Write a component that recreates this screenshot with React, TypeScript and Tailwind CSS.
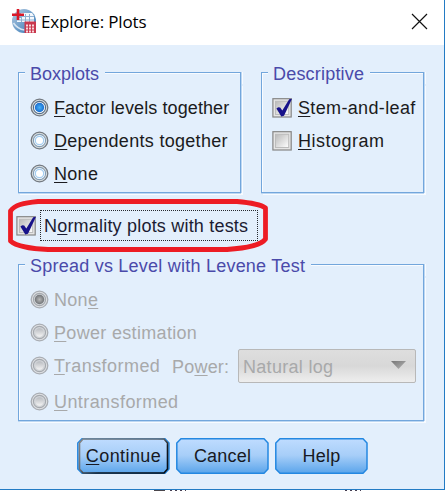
import React from "react";

type GroupProps = { title: string; titleClass: string; className: string; children: React.ReactNode };

function Group({ title, titleClass, className, children }: GroupProps) {
  return (
    <section className={`flex flex-col ${className}`}>
      <div className="flex h-[20px] shrink-0">
        <span className="mt-[8px] h-[12px] w-[7px] shrink-0 border-t border-l border-[#72a6dc] shadow-[inset_1px_1px_0_#f8fbff]" />
        <h2 className={`ml-[5px] mr-[6px] shrink-0 whitespace-nowrap text-[18px] leading-[20px] text-[#4a4aaa] ${titleClass}`}>{title}</h2>
        <span className="mt-[8px] h-[12px] flex-1 border-t border-r border-[#72a6dc] shadow-[inset_0_1px_0_#f8fbff,1px_0_0_#bdd7f2,2px_0_0_#f8fbff]" />
      </div>
      <div className="flex-1 border-x border-b border-[#72a6dc] pl-[11px] shadow-[inset_1px_0_0_#f8fbff,1px_0_0_#bdd7f2,0_1px_0_#bdd7f2,2px_2px_0_#f8fbff]">
        {children}
      </div>
    </section>
  );
}

function Radio({ checked = false, disabled = false }: { checked?: boolean; disabled?: boolean }) {
  const ring = disabled ? "#a9adb3" : "#737980";
  return (
    <svg className="mb-[2px] size-[19px] shrink-0" viewBox="0 0 19 19">
      <defs>
        <linearGradient id="offDisabled" x1="0" y1="0" x2="0" y2="1">
          <stop offset="0" stopColor="#b8bbc0" />
          <stop offset="1" stopColor="#f3f3f3" />
        </linearGradient>
        <radialGradient id="onDisabled">
          <stop offset="0" stopColor="#b8b8b8" />
          <stop offset="1" stopColor="#717477" />
        </radialGradient>
        <radialGradient id="onEnabled">
          <stop offset="0" stopColor="#45b2fa" />
          <stop offset="1" stopColor="#1b6ed0" />
        </radialGradient>
      </defs>
      <circle cx="9.5" cy="9.5" r="8.3" fill={disabled ? "#dfe1e4" : "#d9dedf"} stroke={ring} strokeWidth="1.3" />
      <circle cx="9.5" cy="9.5" r="6.1" fill={disabled ? "#d1d4d8" : "#ffffff"} stroke={disabled ? "#a5a9ae" : checked ? "#546d88" : "#849db4"} strokeWidth="1.1" />
      {!checked && !disabled && <circle cx="9.5" cy="9.5" r="4.2" fill="#ffffff" stroke="#a5cef1" strokeWidth="1.3" />}
      {!checked && disabled && <circle cx="9.5" cy="9.5" r="4.2" fill="url(#offDisabled)" />}
      {checked && <circle cx="9.5" cy="9.5" r="4.7" fill={disabled ? "url(#onDisabled)" : "url(#onEnabled)"} />}
    </svg>
  );
}

function Check({ checked = false }: { checked?: boolean }) {
  return (
    <svg className="size-[20px] shrink-0" viewBox="0 0 20 20">
      <defs>
        <linearGradient id="boxFill" x1="0" y1="0" x2="1" y2="1">
          <stop offset="0" stopColor="#b9b9b9" />
          <stop offset="1" stopColor="#ffffff" />
        </linearGradient>
      </defs>
      <rect x=".9" y=".7" width="18.3" height="18.3" fill="#e5e5e5" stroke="#858585" strokeWidth="1.2" />
      <rect x="3.5" y="3.3" width="13.2" height="13.2" fill="url(#boxFill)" stroke="#bcbcbc" />
      {checked && <path d="M4.4 10.4 6.2 9.2 8.2 9.5 10.3 12.6 17.2 1.3 20 .7 12 17.8 9.3 18.4Z" fill="#17128a" />}
    </svg>
  );
}

function Mnemonic({ text, at }: { text: string; at: number }) {
  return (
    <>
      {text.slice(0, at)}
      <span className="underline decoration-[1px] underline-offset-[2px] [text-decoration-skip-ink:none]">{text[at]}</span>
      {text.slice(at + 1)}
    </>
  );
}

type OptionProps = { text: string; at?: number; checked?: boolean; disabled?: boolean; box?: boolean; className: string; textClass: string };

function Option({ text, at = 0, checked, disabled, box, className, textClass }: OptionProps) {
  return (
    <label className={`flex h-[20px] items-center whitespace-nowrap text-[18px] leading-[20px] ${disabled ? "text-[#a8a9aa]" : "text-[#1b1b20]"} ${className}`}>
      {box ? <Check checked={checked} /> : <Radio checked={checked} disabled={disabled} />}
      <span className={textClass}><Mnemonic text={text} at={at} /></span>
    </label>
  );
}

function AppIcon() {
  return (
    <svg className="ml-[12px] size-[24px] shrink-0" viewBox="0 0 24 24">
      <defs>
        <linearGradient id="globe" x1="0" y1="0" x2="1" y2="1">
          <stop offset="0" stopColor="#b4cae1" />
          <stop offset="1" stopColor="#3177b5" />
        </linearGradient>
      </defs>
      <circle cx="12" cy="12" r="12" fill="url(#globe)" />
      <path d="M9 4h11l2 3v6H5V9h4Z" fill="#f5f8fc" />
      <path d="M9 7.5h13M5 11h17M9.5 5v8M13.5 5v8M17.5 5v8" stroke="#8fb0d1" strokeWidth="1" />
      <path d="M1.5 14q4 6 11 7" fill="none" stroke="#d6e5f2" strokeWidth="1.6" />
      <path d="M6 0v11M0 5.7h12" stroke="#d91828" strokeWidth="2.6" />
      <rect x="12.5" y="12.5" width="11.5" height="11.5" fill="#c9384e" />
      <path d="M14 16.5h9M14 19.5h9M14 22.5h9" stroke="#f8d8dc" strokeWidth="1.8" strokeDasharray="2 1" />
    </svg>
  );
}

function ActionButton({ text, primary, textClass }: { text: string; primary?: boolean; textClass: string }) {
  return (
    <button className="relative flex h-[36px] w-[93px] items-center justify-center text-[18px] leading-[20px] text-[#171923]">
      <svg className="absolute inset-0 size-full" viewBox="0 0 93 36">
        <defs>
          <linearGradient id="buttonFill" x1="0" y1="0" x2="0" y2="1">
            <stop offset="0" stopColor="#bfdcff" />
            <stop offset=".48" stopColor="#a7cef8" />
            <stop offset="1" stopColor="#5ba5eb" />
          </linearGradient>
          <linearGradient id="focusEdge" x1="0" y1="0" x2="1" y2="1">
            <stop offset="0" stopColor="#858585" />
            <stop offset=".45" stopColor="#6b6f74" />
            <stop offset=".6" stopColor="#15191e" />
            <stop offset="1" stopColor="#050b12" />
          </linearGradient>
        </defs>
        <path d="M5 .8H88L92 5V31L88 35.2H5L.8 31V5Z" fill="url(#buttonFill)" stroke="#2488e1" strokeWidth="1.5" />
        {primary && <path d="M6 1H87L90.5 5V31L87 35H6L2.5 31V5Z" fill="none" stroke="url(#focusEdge)" strokeWidth="1.6" />}
      </svg>
      <span className={`relative ${textClass}`}>{primary ? <Mnemonic text={text} at={0} /> : text}</span>
    </button>
  );
}

export default function App() {
  return (
    <main className="relative flex h-[491px] w-[445px] flex-col overflow-hidden bg-white font-['Liberation_Sans',Arial,sans-serif]">
      <div className="flex h-[490px] flex-col border-r border-b border-[#237bc4] bg-[#e3effc]">
        <header className="flex h-[45px] shrink-0 items-center bg-white pb-[3px] text-black">
          <AppIcon />
          <h1 className="ml-[5px] whitespace-nowrap pt-[2px] font-['Open_Sans','Noto_Sans',sans-serif] text-[17px] leading-[24px] tracking-[-0.15px]">Explore: Plots</h1>
          <svg className="mr-[16px] ml-auto size-[17px]" viewBox="0 0 17 17"><path d="m1 1 15 15M16 1 1 16" stroke="#111" strokeWidth="1.2" /></svg>
        </header>

        <div className="flex h-[149px] gap-[20px] pt-[19px] pl-[18px]">
          <Group title="Boxplots" titleClass="tracking-[0px]" className="h-[129px] w-[223px]">
            <Option text="Factor levels together" checked className="mt-[14px]" textClass="ml-[5px] tracking-[0.1px]" />
            <Option text="Dependents together" className="mt-[13px]" textClass="ml-[5px] tracking-[0.3px]" />
            <Option text="None" className="mt-[13px]" textClass="ml-[5px] tracking-[0.3px]" />
          </Group>
          <Group title="Descriptive" titleClass="tracking-[0.2px]" className="h-[129px] w-[163px]">
            <Option box text="Stem-and-leaf" checked className="mt-[14px] ml-[-1px]" textClass="ml-[6px] tracking-[0.35px]" />
            <Option box text="Histogram" className="mt-[13px] ml-[-1px]" textClass="ml-[6px] tracking-[0.5px]" />
          </Group>
        </div>

        <div className="flex h-[62px] items-start pt-[16px] pl-[16px]">
          <div className="flex items-center">
            <Check checked />
            <span className="ml-[4px] flex h-[31px] w-[218px] items-center border border-dotted border-[#26292e] pl-[3px] text-[18px] leading-[20px] whitespace-nowrap text-[#1b1b32]">
              <span className="tracking-[0.2px]"><Mnemonic text="Normality plots with tests" at={1} /></span>
            </span>
          </div>
        </div>

        <Group title="Spread vs Level with Levene Test" titleClass="tracking-[0.23px]" className="ml-[18px] h-[165px] w-[406px]">
          <Option disabled checked text="None" at={3} className="mt-[14px]" textClass="ml-[5px] tracking-[0.3px]" />
          <Option disabled text="Power estimation" className="mt-[13px]" textClass="ml-[5px] tracking-[0.32px]" />
          <div className="mt-[6px] flex h-[34px] items-center">
            <Option disabled text="Transformed" className="w-[142px]" textClass="ml-[5px] tracking-[0.45px]" />
            <span className="mt-[2px] w-[66px] text-[18px] leading-[20px] text-[#a8a9aa] tracking-[0.2px]"><Mnemonic text="Power:" at={2} /></span>
            <div className="flex h-[34px] w-[178px] items-center rounded-[2px] border border-[#b8b8b8] bg-gradient-to-b from-[#dedede] via-[#d8d8d8] to-[#eeeeee] pt-[2px] pl-[4px] text-[18px] leading-[20px] text-[#a8a9aa]">
              <span className="tracking-[0.3px]">Natural log</span>
              <svg className="mb-[4px] mr-[9px] ml-auto h-[8px] w-[15px]" viewBox="0 0 15 8">
                <defs>
                  <linearGradient id="arrowFill" x1="0" y1="0" x2="1" y2="1">
                    <stop offset="0" stopColor="#777777" />
                    <stop offset="1" stopColor="#b5b5b5" />
                  </linearGradient>
                </defs>
                <path d="M0 0H15L7.5 8Z" fill="url(#arrowFill)" />
              </svg>
            </div>
          </div>
          <Option disabled text="Untransformed" className="mt-[9px]" textClass="ml-[5px] tracking-[0.42px]" />
        </Group>

        <footer className="mt-[17px] ml-[77px] flex gap-[6px]">
          <ActionButton text="Continue" primary textClass="tracking-[0.4px]" />
          <ActionButton text="Cancel" textClass="tracking-[0.2px]" />
          <ActionButton text="Help" textClass="tracking-[0.2px]" />
        </footer>
      </div>

      <div className="flex h-px">
        <span className="ml-[154px] h-px w-[11px] bg-[#4a464b]" />
        <span className="ml-[5px] h-px w-[16px] bg-[repeating-linear-gradient(90deg,#463f52_0px,#463f52_2px,#ffffff_2px,#ffffff_5px)]" />
        <span className="ml-[159px] h-px w-[16px] bg-[repeating-linear-gradient(90deg,#463f52_0px,#463f52_2px,#ffffff_2px,#ffffff_5px)]" />
      </div>

      <svg className="pointer-events-none absolute top-[196px] left-[5px] h-[58px] w-[267px]" viewBox="0 0 267 58">
        <path d="M33 5.5H232C244 6.5 255 8 260.5 12V43C257 48 244 52 222 53.5H43C27 53 11 50 5.5 45V15C10 9 18 7 33 5.5Z" fill="none" stroke="#ed1c24" strokeWidth="4.8" strokeLinejoin="round" />
      </svg>
    </main>
  );
}
